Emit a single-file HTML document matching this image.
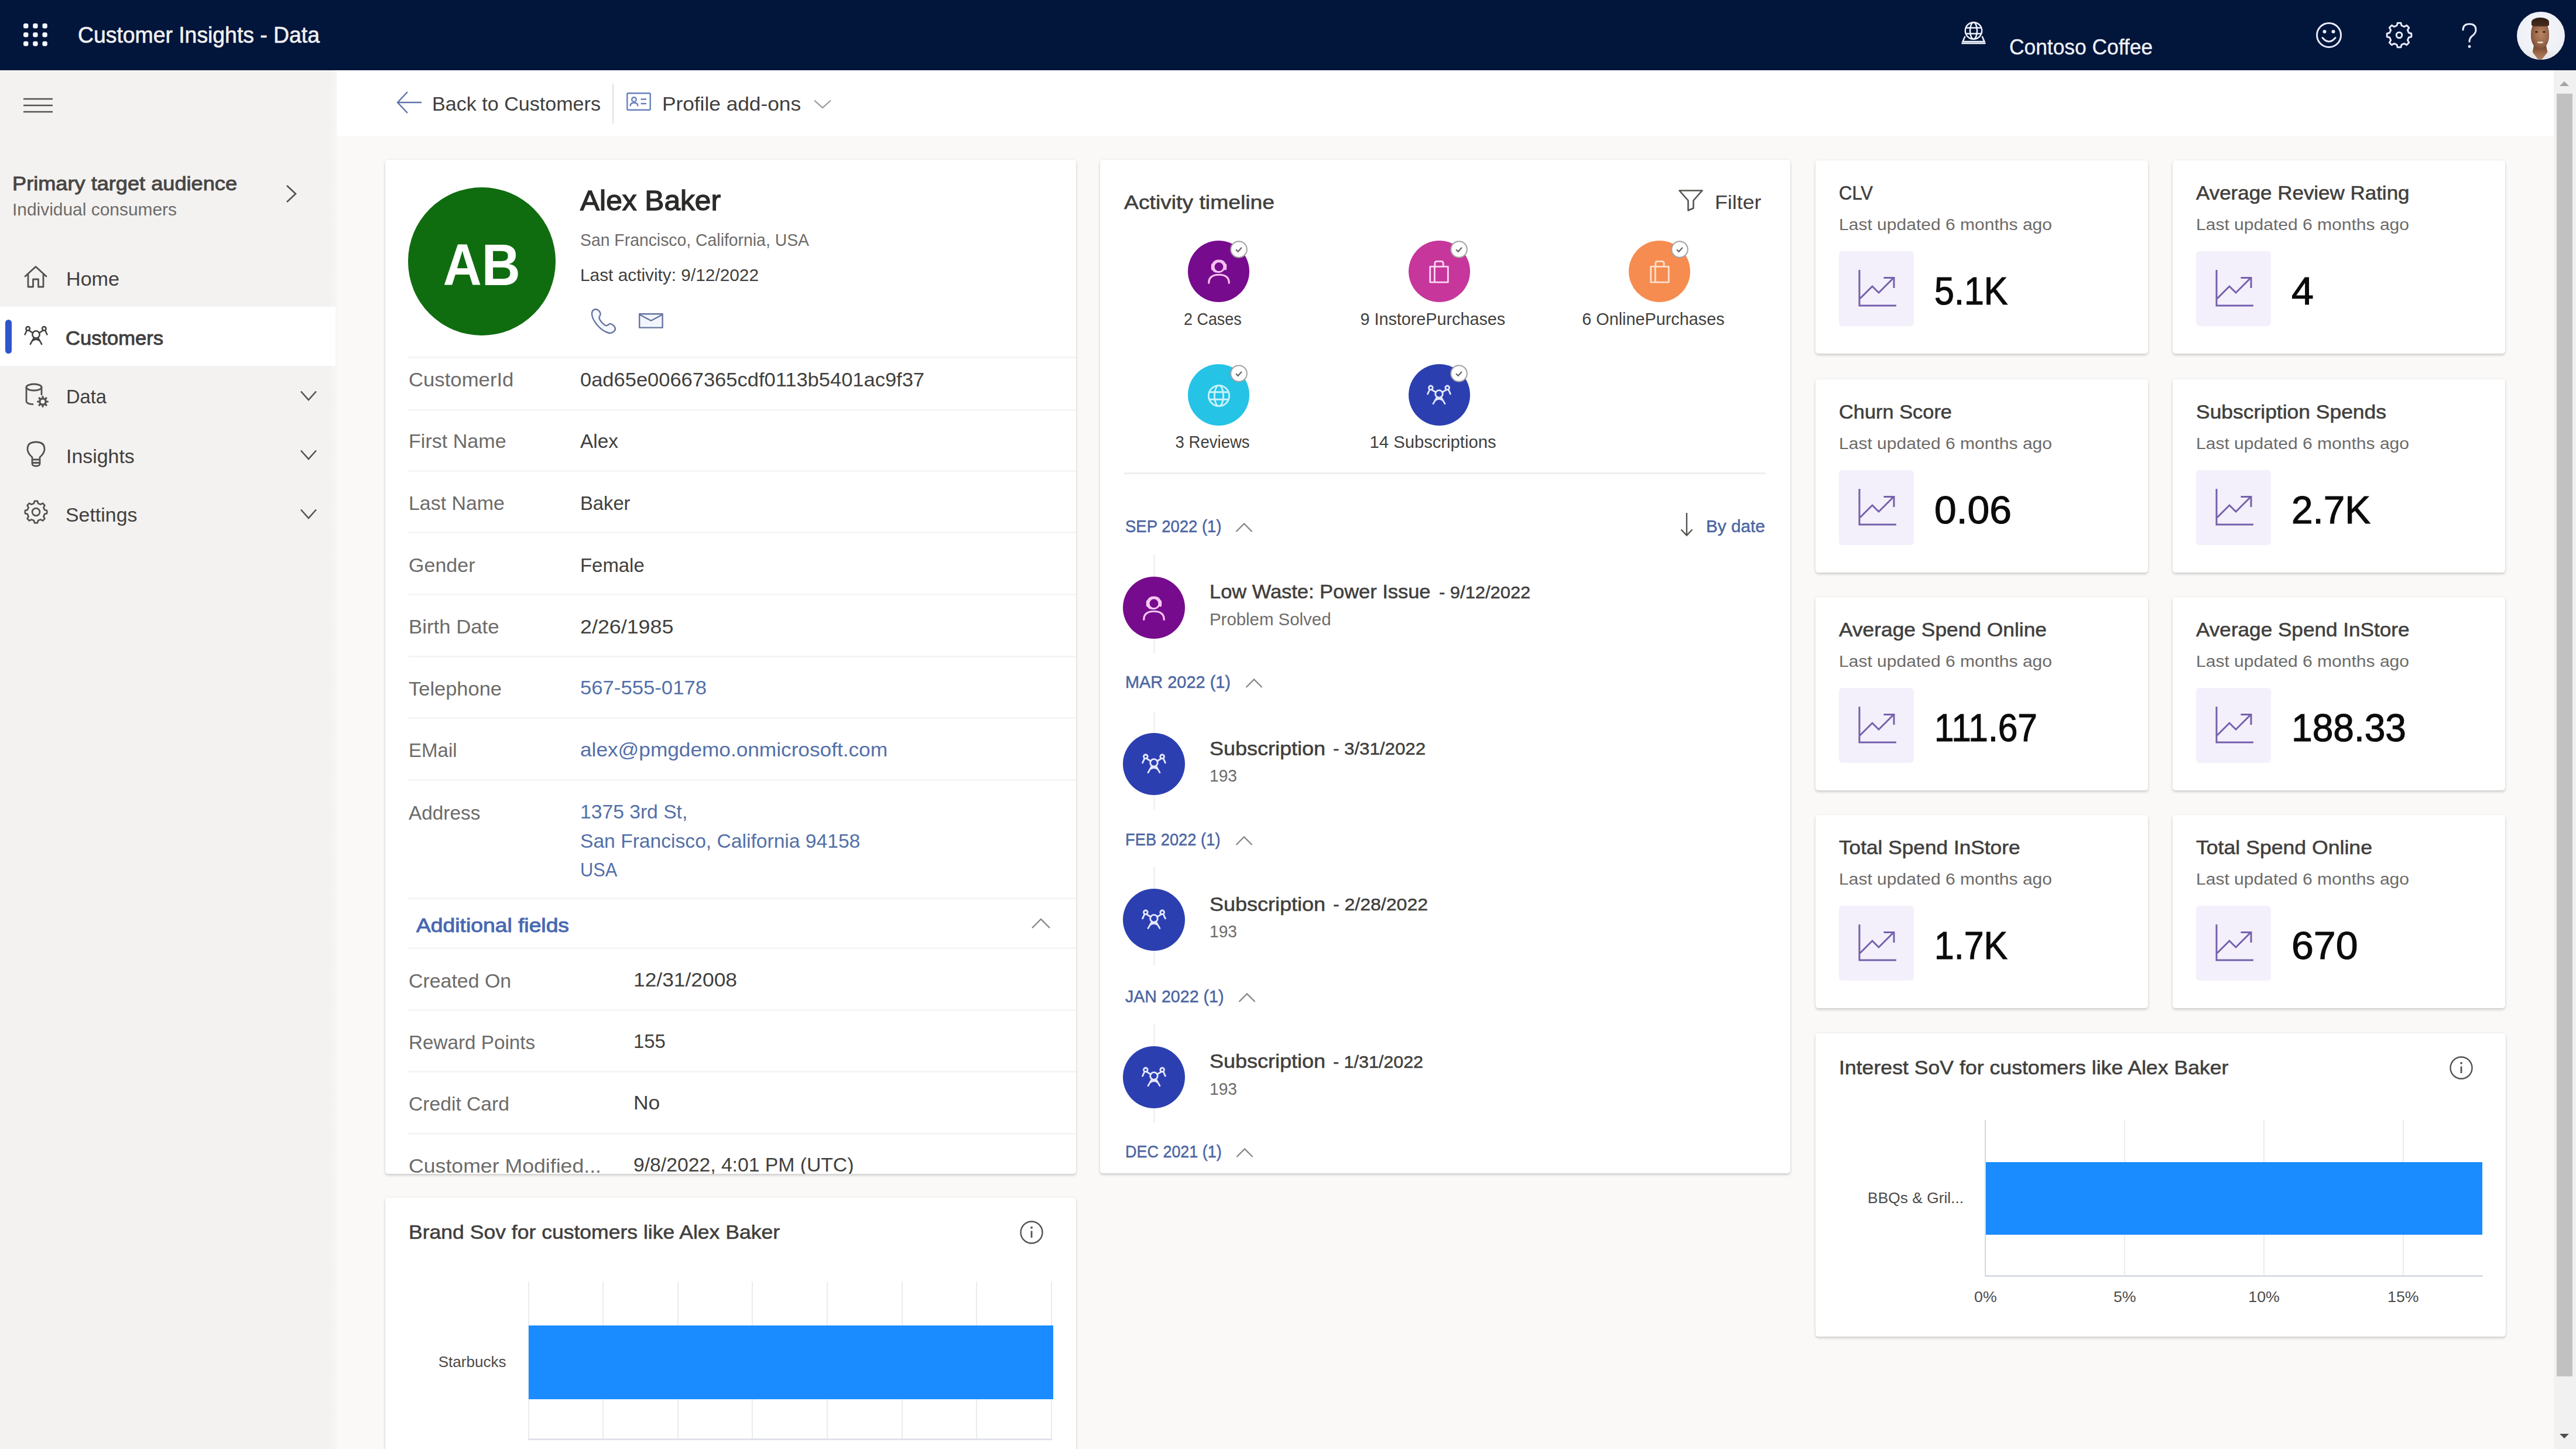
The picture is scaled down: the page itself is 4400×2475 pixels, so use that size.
<!DOCTYPE html>
<html><head><meta charset="utf-8"><title>Customer Insights - Data</title>
<style>
html,body{margin:0;padding:0;}
body{width:4400px;height:2475px;overflow:hidden;position:relative;background:#faf9f8;font-family:"Liberation Sans", sans-serif;}
body div,body svg{position:absolute;}
.t{white-space:nowrap;}
.card{background:#fff;border-radius:5px;box-shadow:0 3px 4px rgba(0,0,0,.15),0 0 4px rgba(0,0,0,.07);}
</style></head><body>
<div style="left:0px;top:0px;width:4400px;height:120px;background:#02153a;"></div>
<div style="left:0px;top:120px;width:575px;height:2355px;background:#f3f2f1;"></div>
<div style="left:575px;top:120px;width:3787px;height:112px;background:#ffffff;"></div>
<div style="left:563px;top:120px;width:12px;height:2355px;background:linear-gradient(90deg,rgba(255,255,255,0),rgba(255,255,255,.35));"></div>
<div style="left:4362px;top:120px;width:38px;height:2355px;background:#f1f1f1;"></div>
<div style="left:4367px;top:160px;width:27px;height:2191px;background:#c1c1c1;"></div>
<svg style="left:4370px;top:136px;" width="20" height="14" viewBox="0 0 20 14" fill="none"><path d="M2 11 L10 3 L18 11 Z" fill="#a3a3a3"/></svg>
<svg style="left:4370px;top:2446px;" width="20" height="14" viewBox="0 0 20 14" fill="none"><path d="M2 3 L10 11 L18 3 Z" fill="#505050"/></svg>
<svg style="left:39.5px;top:39.5px;" width="42" height="40" viewBox="0 0 42 40" fill="none"><rect x="0" y="0" width="8.4" height="8.4" rx="3" fill="#f4f8ff"/><rect x="0" y="15.2" width="8.4" height="8.4" rx="3" fill="#f4f8ff"/><rect x="0" y="30.4" width="8.4" height="8.4" rx="3" fill="#f4f8ff"/><rect x="16.2" y="0" width="8.4" height="8.4" rx="3" fill="#f4f8ff"/><rect x="16.2" y="15.2" width="8.4" height="8.4" rx="3" fill="#f4f8ff"/><rect x="16.2" y="30.4" width="8.4" height="8.4" rx="3" fill="#f4f8ff"/><rect x="32.4" y="0" width="8.4" height="8.4" rx="3" fill="#f4f8ff"/><rect x="32.4" y="15.2" width="8.4" height="8.4" rx="3" fill="#f4f8ff"/><rect x="32.4" y="30.4" width="8.4" height="8.4" rx="3" fill="#f4f8ff"/></svg>
<div class="t" style="left:133px;top:35.0px;line-height:50px;font-size:38.8px;font-weight:normal;-webkit-text-stroke:0.66px currentColor;color:#f0f0f0;transform:scaleX(0.9625);transform-origin:left center;">Customer Insights - Data</div>
<svg style="left:3348px;top:36px;" width="46" height="40" viewBox="0 0 46 40" fill="none"><g stroke="#eef2fb" stroke-width="2.5" fill="none"><circle cx="23" cy="16.5" r="14.2"/><ellipse cx="23" cy="16.5" rx="6" ry="14.2"/><path d="M10 11.5 H36 M10 21.5 H36"/><path d="M8.5 26 L4.5 35 H41.5 L37.5 26"/><path d="M2.5 37.8 H43.5" stroke-width="2.8"/></g></svg>
<div class="t" style="left:3432px;top:55.5px;line-height:49px;font-size:37.5px;font-weight:normal;color:#eef1f8;transform:scaleX(0.9426);transform-origin:left center;-webkit-text-stroke:0.4px #eef1f8;">Contoso Coffee</div>
<svg style="left:3954px;top:36px;" width="48" height="48" viewBox="0 0 48 48" fill="none"><g stroke="#e6eafb" stroke-width="3" fill="none" stroke-linecap="round"><circle cx="24" cy="24" r="20.5"/><path d="M13 28.5 Q24 41.5 35 28.5"/></g><circle cx="16.5" cy="18" r="3" fill="#e6eafb"/><circle cx="31.5" cy="18" r="3" fill="#e6eafb"/></svg>
<svg style="left:4074px;top:36px;" width="48" height="48" viewBox="0 0 48 48" fill="none"><g stroke="#e6eafb" stroke-width="3" fill="none" stroke-linejoin="round"><path d="M19.95 7.70 L21.20 3.19 L26.80 3.19 L28.05 7.70 L32.67 9.61 L36.74 7.31 L40.69 11.26 L38.39 15.33 L40.30 19.95 L44.81 21.20 L44.81 26.80 L40.30 28.05 L38.39 32.67 L40.69 36.74 L36.74 40.69 L32.67 38.39 L28.05 40.30 L26.80 44.81 L21.20 44.81 L19.95 40.30 L15.33 38.39 L11.26 40.69 L7.31 36.74 L9.61 32.67 L7.70 28.05 L3.19 26.80 L3.19 21.20 L7.70 19.95 L9.61 15.33 L7.31 11.26 L11.26 7.31 L15.33 9.61 Z"/><circle cx="24.0" cy="24.0" r="4.80"/></g></svg>
<svg style="left:4200px;top:38px;" width="36" height="46" viewBox="0 0 36 46" fill="none"><path d="M7 13 Q7 3 18 3 Q29 3 29 13 Q29 19 22 24 Q18 27.5 18 33" stroke="#e6eafb" stroke-width="3" fill="none" stroke-linecap="round"/><circle cx="18" cy="41.5" r="2.4" fill="#e6eafb"/></svg>
<div style="left:4298.5px;top:19.5px;width:82px;height:82px;border-radius:50%;overflow:hidden;background:radial-gradient(circle at 50% 45%,#f7f7fb 0%,#eef0f6 65%,#dde2ec 100%);"><div style="left:6px;top:63px;width:70px;height:30px;border-radius:50% 50% 0 0;background:linear-gradient(180deg,#f3f1f4,#d9d6dc);"></div><div style="left:27px;top:56px;width:26px;height:30px;background:linear-gradient(180deg,#5e3a25 0%,#9a6646 45%,#b98a6c 100%);clip-path:polygon(12% 0,88% 0,100% 45%,50% 100%,0 45%);"></div><div style="left:24.5px;top:15px;width:31px;height:48px;border-radius:47% 47% 45% 45%;background:radial-gradient(ellipse at 56% 48%,#b98563 0%,#99664a 50%,#6f4530 88%,#5a3725 100%);"></div><div style="left:25.5px;top:10px;width:29.5px;height:15px;border-radius:50% 50% 18% 18%;background:linear-gradient(180deg,#2e1c12,#4a2e1e);"></div><div style="left:31px;top:33.5px;width:5px;height:3px;border-radius:50%;background:#3a2217;"></div><div style="left:44px;top:33.5px;width:5px;height:3px;border-radius:50%;background:#3a2217;"></div><div style="left:35px;top:51.5px;width:10.5px;height:3.2px;border-radius:20% 20% 50% 50%;background:#e6d3ca;"></div></div>
<svg style="left:40px;top:166px;" width="50" height="28" viewBox="0 0 50 28" fill="none"><path d="M0 3 H50 M0 14 H50 M0 25 H50" stroke="#54524f" stroke-width="2.4"/></svg>
<div class="t" style="left:21px;top:291.0px;line-height:44px;font-size:33.9px;font-weight:normal;-webkit-text-stroke:0.95px currentColor;color:#484644;transform:scaleX(1.0673);transform-origin:left center;">Primary target audience</div>
<div class="t" style="left:21px;top:339.0px;line-height:38px;font-size:29.1px;font-weight:normal;color:#6d6b69;transform:scaleX(1.0282);transform-origin:left center;">Individual consumers</div>
<svg style="left:486px;top:314px;" width="24" height="34" viewBox="0 0 24 34" fill="none"><path d="M4 3 L19 17 L4 31" stroke="#54524f" stroke-width="2.6"/></svg>
<div style="left:0px;top:524px;width:573px;height:101px;background:#ffffff;"></div>
<div style="left:9px;top:546px;width:11px;height:58px;background:#2f54cc;border-radius:6px;"></div>
<svg style="left:40px;top:452px;" width="42" height="42" viewBox="0 0 42 42" fill="none"><path d="M3 20 L21 3.5 L39 20 M8 16 V38 H16.5 V25 H25.5 V38 H34 V16" stroke="#54524f" stroke-width="2.8" stroke-linejoin="round" stroke-linecap="round"/></svg>
<div class="t" style="left:113px;top:454.0px;line-height:44px;font-size:33.9px;font-weight:normal;color:#413f3d;transform:scaleX(1.0066);transform-origin:left center;">Home</div>
<svg style="left:41px;top:553.5px;" width="41" height="41" viewBox="0 0 41 41" fill="none"><g transform="scale(1.025)" stroke="#413f3d" stroke-width="2.44" fill="none" stroke-linecap="round" stroke-linejoin="round"><circle cx="20" cy="17" r="6"/><path d="M10.5 33 L16.5 22.5 M29.5 33 L23.5 22.5 M14.5 27 Q20 23 25.5 27"/><circle cx="6.5" cy="7" r="3.2"/><path d="M1.5 17 L4.5 10.5 M8.5 10.5 L14.5 14"/><circle cx="33.5" cy="7" r="3.2"/><path d="M38.5 17 L35.5 10.5 M31.5 10.5 L25.5 14"/></g></svg>
<div class="t" style="left:112px;top:555.0px;line-height:44px;font-size:33.9px;font-weight:normal;-webkit-text-stroke:0.95px currentColor;color:#413f3d;transform:scaleX(1.0193);transform-origin:left center;">Customers</div>
<svg style="left:42px;top:654px;" width="44" height="44" viewBox="0 0 44 44" fill="none"><g stroke="#54524f" stroke-width="2.8" fill="none" stroke-linecap="round"><ellipse cx="16" cy="7.5" rx="13" ry="5.5"/><path d="M3 7.5 V31 Q3 36 14 36.5 M29 7.5 V20"/></g><circle cx="31" cy="32" r="5.2" stroke="#54524f" stroke-width="3.4" fill="none"/><g stroke="#54524f" stroke-width="3.2" stroke-linecap="round"><path d="M31 23.5 V25 M31 39 V40.5 M22.5 32 H24 M38 32 H39.5 M25 26 L26 27 M36 37 L37 38 M25 38 L26 37 M36 27 L37 26"/></g></svg>
<div class="t" style="left:113px;top:655.0px;line-height:44px;font-size:33.9px;font-weight:normal;color:#413f3d;transform:scaleX(0.9638);transform-origin:left center;">Data</div>
<svg style="left:513px;top:667px;" width="28" height="18" viewBox="0 0 28 18" fill="none"><path d="M1 1.5 L14.0 16 L27 1.5" stroke="#54524f" stroke-width="2.6"/></svg>
<svg style="left:44px;top:752px;" width="36" height="48" viewBox="0 0 36 48" fill="none"><g stroke="#54524f" stroke-width="2.8" fill="none" stroke-linejoin="round"><path d="M11 33 V29 Q3 22 3 15 Q3 3 17.5 3 Q32 3 32 15 Q32 22 24 29 V33 Z"/><path d="M11 33 V40 Q11 44 17.5 44 Q24 44 24 40 V33 M11 38.5 H24"/></g></svg>
<div class="t" style="left:113px;top:757.0px;line-height:44px;font-size:33.9px;font-weight:normal;color:#413f3d;">Insights</div>
<svg style="left:513px;top:768px;" width="28" height="18" viewBox="0 0 28 18" fill="none"><path d="M1 1.5 L14.0 16 L27 1.5" stroke="#54524f" stroke-width="2.6"/></svg>
<svg style="left:40px;top:853px;" width="43" height="43" viewBox="0 0 43 43" fill="none"><g stroke="#54524f" stroke-width="2.7" fill="none" stroke-linejoin="round"><path d="M17.87 6.89 L19.00 2.87 L24.00 2.87 L25.13 6.89 L29.26 8.61 L32.91 6.56 L36.44 10.09 L34.39 13.74 L36.11 17.87 L40.13 19.00 L40.13 24.00 L36.11 25.13 L34.39 29.26 L36.44 32.91 L32.91 36.44 L29.26 34.39 L25.13 36.11 L24.00 40.13 L19.00 40.13 L17.87 36.11 L13.74 34.39 L10.09 36.44 L6.56 32.91 L8.61 29.26 L6.89 25.13 L2.87 24.00 L2.87 19.00 L6.89 17.87 L8.61 13.74 L6.56 10.09 L10.09 6.56 L13.74 8.61 Z"/><circle cx="21.5" cy="21.5" r="6.45"/></g></svg>
<div class="t" style="left:112px;top:857.0px;line-height:44px;font-size:33.9px;font-weight:normal;color:#413f3d;">Settings</div>
<svg style="left:513px;top:869px;" width="28" height="18" viewBox="0 0 28 18" fill="none"><path d="M1 1.5 L14.0 16 L27 1.5" stroke="#54524f" stroke-width="2.6"/></svg>
<svg style="left:676px;top:155px;" width="46" height="40" viewBox="0 0 46 40" fill="none"><path d="M44 20 H3 M20 2 L3 20 L20 38" stroke="#6074ab" stroke-width="2.5" stroke-linejoin="round"/></svg>
<div class="t" style="left:738px;top:155.0px;line-height:44px;font-size:33.9px;font-weight:normal;color:#413f3d;transform:scaleX(1.0059);transform-origin:left center;">Back to Customers</div>
<div style="left:1046px;top:143px;width:2px;height:68px;background:#e1dfdd;"></div>
<svg style="left:1069.5px;top:158px;" width="42" height="32" viewBox="0 0 42 32" fill="none"><g stroke="#6880bb" stroke-width="2.4" fill="none"><rect x="1.3" y="1.3" width="39.4" height="28.4" rx="1.5"/><circle cx="13" cy="12" r="3.8"/><path d="M6.5 23.5 Q6.5 17.5 13 17.5 Q19.5 17.5 19.5 23.5 M24.5 11.5 H34 M24.5 19 H34"/></g></svg>
<div class="t" style="left:1131px;top:155.0px;line-height:44px;font-size:33.9px;font-weight:normal;color:#413f3d;transform:scaleX(1.0397);transform-origin:left center;">Profile add-ons</div>
<svg style="left:1390px;top:170px;" width="30" height="16" viewBox="0 0 30 16" fill="none"><path d="M1 1.5 L15.0 14 L29 1.5" stroke="#9a9896" stroke-width="2.2"/></svg>
<div class="card" style="left:658px;top:273px;width:1180px;height:1732px;overflow:hidden;">
<div style="left:38.5px;top:47px;width:252.5px;height:252.5px;background:#0f6d10;border-radius:50%;"></div>
<div class="t" style="left:91.9px;top:114.0px;line-height:131px;font-size:100.9px;font-weight:bold;color:#ffffff;transform:scaleX(0.9058);transform-origin:center center;">AB</div>
<div class="t" style="left:332.5px;top:38.0px;line-height:63px;font-size:48.5px;font-weight:normal;-webkit-text-stroke:1.36px currentColor;color:#2b2a29;transform:scaleX(1.0233);transform-origin:left center;">Alex Baker</div>
<div class="t" style="left:332.5px;top:117.5px;line-height:38px;font-size:29.1px;font-weight:normal;color:#6d6b69;transform:scaleX(0.9750);transform-origin:left center;">San Francisco, California, USA</div>
<div class="t" style="left:332.5px;top:177.7px;line-height:38px;font-size:29.1px;font-weight:normal;color:#413f3d;transform:scaleX(1.0249);transform-origin:left center;">Last activity: 9/12/2022</div>
<svg style="left:350px;top:253px;" width="46" height="46" viewBox="0 0 46 46" fill="none"><path d="M9.5 2.2 C5 2.2 2.6 6 3 11 C4 22 17 38 31 42.5 C36 44.3 43.4 40 43 35 C42.6 32 38 27.6 35 27.1 C32 26.6 30 30.6 27.5 30.1 C23 29.2 16 21 15.5 17 C15.1 14 18.4 12.5 17.5 9 C16.6 5.5 13 2.2 9.5 2.2 Z" stroke="#66749f" stroke-width="2.4" stroke-linejoin="round" fill="#f6f8ff"/></svg>
<svg style="left:433px;top:261.5px;" width="42" height="26" viewBox="0 0 42 26" fill="none"><g stroke="#66749f" stroke-width="2.4" stroke-linejoin="round"><rect x="1.2" y="1.2" width="39.4" height="23.4" fill="#f3f6ff"/><path d="M1.8 2.5 L21 12.8 L40.2 2.5" fill="none"/></g></svg>
<div style="left:38.5px;top:336px;width:1141.5px;height:3px;background:#f6f5f4;"></div>
<div class="t" style="left:40px;top:352.7px;line-height:44px;font-size:33.9px;font-weight:normal;color:#6d6b69;transform:scaleX(1.0241);transform-origin:left center;">CustomerId</div>
<div class="t" style="left:332.5px;top:352.7px;line-height:44px;font-size:33.9px;font-weight:normal;color:#413f3d;transform:scaleX(1.0174);transform-origin:left center;">0ad65e00667365cdf0113b5401ac9f37</div>
<div style="left:38.5px;top:426px;width:1141.5px;height:3px;background:#f6f5f4;"></div>
<div class="t" style="left:40px;top:458.3px;line-height:44px;font-size:33.9px;font-weight:normal;color:#6d6b69;transform:scaleX(1.0060);transform-origin:left center;">First Name</div>
<div class="t" style="left:332.5px;top:458.3px;line-height:44px;font-size:33.9px;font-weight:normal;color:#413f3d;transform:scaleX(0.9858);transform-origin:left center;">Alex</div>
<div style="left:38.5px;top:530px;width:1141.5px;height:3px;background:#f6f5f4;"></div>
<div class="t" style="left:40px;top:563.9px;line-height:44px;font-size:33.9px;font-weight:normal;color:#6d6b69;">Last Name</div>
<div class="t" style="left:332.5px;top:563.9px;line-height:44px;font-size:33.9px;font-weight:normal;color:#413f3d;transform:scaleX(0.9656);transform-origin:left center;">Baker</div>
<div style="left:38.5px;top:635px;width:1141.5px;height:3px;background:#f6f5f4;"></div>
<div class="t" style="left:40px;top:669.5px;line-height:44px;font-size:33.9px;font-weight:normal;color:#6d6b69;transform:scaleX(1.0040);transform-origin:left center;">Gender</div>
<div class="t" style="left:332.5px;top:669.5px;line-height:44px;font-size:33.9px;font-weight:normal;color:#413f3d;transform:scaleX(0.9707);transform-origin:left center;">Female</div>
<div style="left:38.5px;top:741px;width:1141.5px;height:3px;background:#f6f5f4;"></div>
<div class="t" style="left:40px;top:775.1px;line-height:44px;font-size:33.9px;font-weight:normal;color:#6d6b69;transform:scaleX(1.0259);transform-origin:left center;">Birth Date</div>
<div class="t" style="left:332.5px;top:775.1px;line-height:44px;font-size:33.9px;font-weight:normal;color:#413f3d;transform:scaleX(1.0572);transform-origin:left center;">2/26/1985</div>
<div style="left:38.5px;top:847px;width:1141.5px;height:3px;background:#f6f5f4;"></div>
<div class="t" style="left:40px;top:880.7px;line-height:44px;font-size:33.9px;font-weight:normal;color:#6d6b69;transform:scaleX(1.0165);transform-origin:left center;">Telephone</div>
<div class="t" style="left:332.5px;top:879.2px;line-height:44px;font-size:33.9px;font-weight:normal;color:#5370a8;transform:scaleX(1.0234);transform-origin:left center;">567-555-0178</div>
<div style="left:38.5px;top:952px;width:1141.5px;height:3px;background:#f6f5f4;"></div>
<div class="t" style="left:40px;top:986.3px;line-height:44px;font-size:33.9px;font-weight:normal;color:#6d6b69;transform:scaleX(0.9746);transform-origin:left center;">EMail</div>
<div class="t" style="left:332.5px;top:984.8px;line-height:44px;font-size:33.9px;font-weight:normal;color:#5370a8;transform:scaleX(1.0390);transform-origin:left center;">alex@pmgdemo.onmicrosoft.com</div>
<div style="left:38.5px;top:1058px;width:1141.5px;height:3px;background:#f6f5f4;"></div>
<div class="t" style="left:40px;top:1093.0px;line-height:44px;font-size:33.9px;font-weight:normal;color:#6d6b69;transform:scaleX(0.9845);transform-origin:left center;">Address</div>
<div class="t" style="left:332.5px;top:1091.0px;line-height:44px;font-size:33.9px;font-weight:normal;color:#5370a8;transform:scaleX(0.9927);transform-origin:left center;">1375 3rd St,</div>
<div class="t" style="left:332.5px;top:1140.7px;line-height:44px;font-size:33.9px;font-weight:normal;color:#5370a8;transform:scaleX(0.9918);transform-origin:left center;">San Francisco, California 94158</div>
<div class="t" style="left:332.5px;top:1190.4px;line-height:44px;font-size:33.9px;font-weight:normal;color:#5370a8;transform:scaleX(0.9098);transform-origin:left center;">USA</div>
<div style="left:38.5px;top:1260px;width:1141.5px;height:3px;background:#f6f5f4;"></div>
<div class="t" style="left:53.39999999999998px;top:1285.0px;line-height:44px;font-size:33.9px;font-weight:normal;-webkit-text-stroke:0.95px currentColor;color:#4868b0;transform:scaleX(1.0995);transform-origin:left center;">Additional fields</div>
<svg style="left:1103px;top:1294px" width="34" height="20" viewBox="0 0 34 20" fill="none"><path d="M2 18 L17 3 L32 18" stroke="#8a8886" stroke-width="2.4"/></svg>
<div style="left:38.5px;top:1345px;width:1141.5px;height:3px;background:#f6f5f4;"></div>
<div class="t" style="left:40px;top:1379.6px;line-height:44px;font-size:33.9px;font-weight:normal;color:#6d6b69;">Created On</div>
<div class="t" style="left:424.29999999999995px;top:1377.6px;line-height:44px;font-size:33.9px;font-weight:normal;color:#413f3d;transform:scaleX(1.0435);transform-origin:left center;">12/31/2008</div>
<div style="left:38.5px;top:1451px;width:1141.5px;height:3px;background:#f6f5f4;"></div>
<div class="t" style="left:40px;top:1484.8px;line-height:44px;font-size:33.9px;font-weight:normal;color:#6d6b69;transform:scaleX(0.9810);transform-origin:left center;">Reward Points</div>
<div class="t" style="left:424.29999999999995px;top:1482.8px;line-height:44px;font-size:33.9px;font-weight:normal;color:#413f3d;transform:scaleX(0.9673);transform-origin:left center;">155</div>
<div style="left:38.5px;top:1556px;width:1141.5px;height:3px;background:#f6f5f4;"></div>
<div class="t" style="left:40px;top:1590.0px;line-height:44px;font-size:33.9px;font-weight:normal;color:#6d6b69;transform:scaleX(0.9926);transform-origin:left center;">Credit Card</div>
<div class="t" style="left:424.29999999999995px;top:1588.0px;line-height:44px;font-size:33.9px;font-weight:normal;color:#413f3d;transform:scaleX(1.0455);transform-origin:left center;">No</div>
<div style="left:38.5px;top:1662px;width:1141.5px;height:3px;background:#f6f5f4;"></div>
<div class="t" style="left:40px;top:1696.0px;line-height:44px;font-size:33.9px;font-weight:normal;color:#6d6b69;transform:scaleX(1.0522);transform-origin:left center;">Customer Modified...</div>
<div class="t" style="left:424.29999999999995px;top:1694.0px;line-height:44px;font-size:33.9px;font-weight:normal;color:#413f3d;transform:scaleX(0.9942);transform-origin:left center;">9/8/2022, 4:01 PM (UTC)</div>
</div>
<div class="card" style="left:658px;top:2046px;width:1180px;height:500px;"></div>
<div class="t" style="left:698px;top:2082.0px;line-height:44px;font-size:33.9px;font-weight:normal;-webkit-text-stroke:0.58px currentColor;color:#413f3d;transform:scaleX(1.0486);transform-origin:left center;">Brand Sov for customers like Alex Baker</div>
<svg style="left:1741px;top:2084px;" width="42" height="42" viewBox="0 0 42 42" fill="none"><circle cx="21" cy="21" r="18.5" stroke="#55534f" stroke-width="2.4"/><path d="M21 18.5 V30" stroke="#55534f" stroke-width="2.8"/><circle cx="21" cy="12.8" r="1.9" fill="#55534f"/></svg>
<div style="left:902px;top:2189px;width:2px;height:270px;background:#eaecf1;"></div>
<div style="left:1029px;top:2189px;width:2px;height:270px;background:#eaecf1;"></div>
<div style="left:1157px;top:2189px;width:2px;height:270px;background:#eaecf1;"></div>
<div style="left:1284px;top:2189px;width:2px;height:270px;background:#eaecf1;"></div>
<div style="left:1412px;top:2189px;width:2px;height:270px;background:#eaecf1;"></div>
<div style="left:1540px;top:2189px;width:2px;height:270px;background:#eaecf1;"></div>
<div style="left:1667px;top:2189px;width:2px;height:270px;background:#eaecf1;"></div>
<div style="left:1795px;top:2189px;width:2px;height:270px;background:#eaecf1;"></div>
<div style="left:902px;top:2457px;width:895px;height:2.5px;background:#dfe2ea;"></div>
<div style="left:903px;top:2263.5px;width:896px;height:126px;background:#1a8cff;"></div>
<div class="t" style="left:746.3px;top:2308.5px;line-height:35px;font-size:26.7px;font-weight:normal;color:#4d4b49;transform:scaleX(0.9775);transform-origin:right center;">Starbucks</div>
<div class="card" style="left:1879px;top:273px;width:1179px;height:1731px;"></div>
<div class="t" style="left:1920px;top:322.7px;line-height:44px;font-size:33.9px;font-weight:normal;-webkit-text-stroke:0.58px currentColor;color:#413f3d;transform:scaleX(1.1005);transform-origin:left center;">Activity timeline</div>
<svg style="left:2866px;top:323px;" width="44" height="39" viewBox="0 0 44 39" fill="none"><path d="M2.5 2.5 H41.5 L26.5 19.5 V32.5 L17.5 36.5 V19.5 Z" stroke="#54524f" stroke-width="2.6" stroke-linejoin="round"/></svg>
<div class="t" style="left:2929px;top:322.7px;line-height:44px;font-size:33.9px;font-weight:normal;color:#413f3d;transform:scaleX(1.0556);transform-origin:left center;">Filter</div>
<div style="left:2029.1px;top:410.5px;width:105px;height:105px;background:#770b8d;border-radius:50%;"></div>
<svg style="left:2058.6px;top:441.0px;" width="46" height="46" viewBox="0 0 46 46" fill="none"><g transform="scale(1.0454545454545454)" stroke="#f6c2f1" stroke-width="3" fill="none" stroke-linecap="round"><circle cx="22" cy="14" r="8.6"/><path d="M5.5 40.5 Q5.5 27 22 27 Q38.5 27 38.5 40.5"/><path d="M12 11 Q13 3.5 22 3.5 Q31 3.5 32 11" stroke-width="2.4"/><path d="M11.5 11 V17.5 M32.5 11 V17.5" stroke-width="4.2"/><path d="M12 18 Q13.5 23 21 22.5" stroke-width="2.2"/></g></svg>
<svg style="left:2099.6px;top:410px;" width="32" height="32" viewBox="0 0 32 32" fill="none"><circle cx="16" cy="16" r="13.8" fill="#fff" stroke="#a3a19f" stroke-width="2"/><path d="M11 16.3 L14.6 19.8 L21 12.8" stroke="#6b6967" stroke-width="2.3" fill="none"/></svg>
<div class="t" style="left:2017.7px;top:525.6px;line-height:38px;font-size:29.1px;font-weight:normal;color:#413f3d;transform:scaleX(0.9229);transform-origin:center center;">2 Cases</div>
<div style="left:2405.5px;top:410.5px;width:105px;height:105px;background:#c6369b;border-radius:50%;"></div>
<svg style="left:2437.0px;top:443.0px;" width="42" height="42" viewBox="0 0 42 42" fill="none"><g transform="scale(0.9545454545454546)" stroke="#fcd6f0" stroke-width="3" fill="none" stroke-linejoin="round"><rect x="6" y="13" width="32" height="28"/><path d="M14 41 V13 M14.5 13 V7 Q14.5 3.5 18.5 3.5 H25.5 Q29.5 3.5 29.5 7 V13"/></g></svg>
<svg style="left:2476px;top:410px;" width="32" height="32" viewBox="0 0 32 32" fill="none"><circle cx="16" cy="16" r="13.8" fill="#fff" stroke="#a3a19f" stroke-width="2"/><path d="M11 16.3 L14.6 19.8 L21 12.8" stroke="#6b6967" stroke-width="2.3" fill="none"/></svg>
<div class="t" style="left:2322.2px;top:525.6px;line-height:38px;font-size:29.1px;font-weight:normal;color:#413f3d;transform:scaleX(0.9881);transform-origin:center center;">9 InstorePurchases</div>
<div style="left:2782.2px;top:410.5px;width:105px;height:105px;background:#f68c4f;border-radius:50%;"></div>
<svg style="left:2813.7px;top:443.0px;" width="42" height="42" viewBox="0 0 42 42" fill="none"><g transform="scale(0.9545454545454546)" stroke="#fde0cb" stroke-width="3" fill="none" stroke-linejoin="round"><rect x="6" y="13" width="32" height="28"/><path d="M14 41 V13 M14.5 13 V7 Q14.5 3.5 18.5 3.5 H25.5 Q29.5 3.5 29.5 7 V13"/></g></svg>
<svg style="left:2852.7px;top:410px;" width="32" height="32" viewBox="0 0 32 32" fill="none"><circle cx="16" cy="16" r="13.8" fill="#fff" stroke="#a3a19f" stroke-width="2"/><path d="M11 16.3 L14.6 19.8 L21 12.8" stroke="#6b6967" stroke-width="2.3" fill="none"/></svg>
<div class="t" style="left:2701.3px;top:525.6px;line-height:38px;font-size:29.1px;font-weight:normal;color:#413f3d;transform:scaleX(0.9901);transform-origin:center center;">6 OnlinePurchases</div>
<div style="left:2029.1px;top:622.3px;width:105px;height:105px;background:#25c3e6;border-radius:50%;"></div>
<svg style="left:2060.6px;top:654.8px;" width="42" height="42" viewBox="0 0 42 42" fill="none"><g transform="scale(0.9545454545454546)" stroke="#c9f3fb" stroke-width="3" fill="none"><circle cx="22" cy="22" r="18.5"/><ellipse cx="22" cy="22" rx="8" ry="18.5"/><path d="M4.5 15.5 H39.5 M4.5 28.5 H39.5"/></g></svg>
<svg style="left:2099.6px;top:621.8px;" width="32" height="32" viewBox="0 0 32 32" fill="none"><circle cx="16" cy="16" r="13.8" fill="#fff" stroke="#a3a19f" stroke-width="2"/><path d="M11 16.3 L14.6 19.8 L21 12.8" stroke="#6b6967" stroke-width="2.3" fill="none"/></svg>
<div class="t" style="left:2004.0px;top:736.0px;line-height:38px;font-size:29.1px;font-weight:normal;color:#413f3d;transform:scaleX(0.9462);transform-origin:center center;">3 Reviews</div>
<div style="left:2405.5px;top:622.3px;width:105px;height:105px;background:#2c3fb1;border-radius:50%;"></div>
<svg style="left:2437.0px;top:654.8px;" width="42" height="42" viewBox="0 0 42 42" fill="none"><g transform="scale(1.05)" stroke="#e3e7ff" stroke-width="2.67" fill="none" stroke-linecap="round" stroke-linejoin="round"><circle cx="20" cy="17" r="6"/><path d="M10.5 33 L16.5 22.5 M29.5 33 L23.5 22.5 M14.5 27 Q20 23 25.5 27"/><circle cx="6.5" cy="7" r="3.2"/><path d="M1.5 17 L4.5 10.5 M8.5 10.5 L14.5 14"/><circle cx="33.5" cy="7" r="3.2"/><path d="M38.5 17 L35.5 10.5 M31.5 10.5 L25.5 14"/></g></svg>
<svg style="left:2476px;top:621.8px;" width="32" height="32" viewBox="0 0 32 32" fill="none"><circle cx="16" cy="16" r="13.8" fill="#fff" stroke="#a3a19f" stroke-width="2"/><path d="M11 16.3 L14.6 19.8 L21 12.8" stroke="#6b6967" stroke-width="2.3" fill="none"/></svg>
<div class="t" style="left:2340.0px;top:736.0px;line-height:38px;font-size:29.1px;font-weight:normal;color:#413f3d;transform:scaleX(1.0042);transform-origin:center center;">14 Subscriptions</div>
<div style="left:1920px;top:807px;width:1096px;height:3px;background:#efeeed;"></div>
<div class="t" style="left:1922px;top:881.1px;line-height:37px;font-size:28.6px;font-weight:normal;-webkit-text-stroke:0.49px currentColor;color:#4c66a2;transform:scaleX(0.9611);transform-origin:left center;">SEP 2022 (1)</div>
<svg style="left:2110px;top:892.1px;" width="30" height="18" viewBox="0 0 30 18" fill="none"><path d="M1.5 16 L15 2.5 L28.5 16" stroke="#8a8886" stroke-width="2.4"/></svg>
<div class="t" style="left:2913.8px;top:881.1px;line-height:37px;font-size:28.6px;font-weight:normal;-webkit-text-stroke:0.49px currentColor;color:#4c66a2;transform:scaleX(1.0395);transform-origin:left center;">By date</div>
<svg style="left:2868px;top:874px;" width="26" height="44" viewBox="0 0 26 44" fill="none"><path d="M13 2 V40 M3.5 30.5 L13 40.5 L22.5 30.5" stroke="#55534f" stroke-width="2.4"/></svg>
<div style="left:1970px;top:947.5px;width:3px;height:168px;background:#f3f2f1;"></div>
<div style="left:1918.3px;top:984.5px;width:106px;height:106px;background:#770b8d;border-radius:50%;"></div>
<svg style="left:1948.3px;top:1015.5px;" width="46" height="46" viewBox="0 0 46 46" fill="none"><g transform="scale(1.0454545454545454)" stroke="#f9c9f4" stroke-width="3" fill="none" stroke-linecap="round"><circle cx="22" cy="14" r="8.6"/><path d="M5.5 40.5 Q5.5 27 22 27 Q38.5 27 38.5 40.5"/><path d="M12 11 Q13 3.5 22 3.5 Q31 3.5 32 11" stroke-width="2.4"/><path d="M11.5 11 V17.5 M32.5 11 V17.5" stroke-width="4.2"/><path d="M12 18 Q13.5 23 21 22.5" stroke-width="2.2"/></g></svg>
<div class="t" style="left:2066px;top:988.0px;line-height:44px;font-size:33.9px;font-weight:normal;-webkit-text-stroke:0.58px currentColor;color:#413f3d;transform:scaleX(1.0156);transform-origin:left center;">Low Waste: Power Issue</div>
<div class="t" style="left:2457.7px;top:992.5px;line-height:38px;font-size:29.1px;font-weight:normal;-webkit-text-stroke:0.49px currentColor;color:#413f3d;transform:scaleX(1.0618);transform-origin:left center;">- 9/12/2022</div>
<div class="t" style="left:2066px;top:1038.5px;line-height:38px;font-size:29.1px;font-weight:normal;color:#6d6b69;transform:scaleX(1.0103);transform-origin:left center;">Problem Solved</div>
<div class="t" style="left:1922px;top:1147.2px;line-height:37px;font-size:28.6px;font-weight:normal;-webkit-text-stroke:0.49px currentColor;color:#4c66a2;transform:scaleX(1.0112);transform-origin:left center;">MAR 2022 (1)</div>
<svg style="left:2127px;top:1158.2px;" width="30" height="18" viewBox="0 0 30 18" fill="none"><path d="M1.5 16 L15 2.5 L28.5 16" stroke="#8a8886" stroke-width="2.4"/></svg>
<div style="left:1970px;top:1215.2px;width:3px;height:168px;background:#f3f2f1;"></div>
<div style="left:1918.3px;top:1252.2px;width:106px;height:106px;background:#2c3fb1;border-radius:50%;"></div>
<svg style="left:1950.3px;top:1285.2px;" width="42" height="42" viewBox="0 0 42 42" fill="none"><g transform="scale(1.05)" stroke="#e6e9ff" stroke-width="2.67" fill="none" stroke-linecap="round" stroke-linejoin="round"><circle cx="20" cy="17" r="6"/><path d="M10.5 33 L16.5 22.5 M29.5 33 L23.5 22.5 M14.5 27 Q20 23 25.5 27"/><circle cx="6.5" cy="7" r="3.2"/><path d="M1.5 17 L4.5 10.5 M8.5 10.5 L14.5 14"/><circle cx="33.5" cy="7" r="3.2"/><path d="M38.5 17 L35.5 10.5 M31.5 10.5 L25.5 14"/></g></svg>
<div class="t" style="left:2066px;top:1255.7px;line-height:44px;font-size:33.9px;font-weight:normal;-webkit-text-stroke:0.58px currentColor;color:#413f3d;transform:scaleX(1.0617);transform-origin:left center;">Subscription</div>
<div class="t" style="left:2277px;top:1260.2px;line-height:38px;font-size:29.1px;font-weight:normal;-webkit-text-stroke:0.49px currentColor;color:#413f3d;transform:scaleX(1.0733);transform-origin:left center;">- 3/31/2022</div>
<div class="t" style="left:2066px;top:1306.2px;line-height:38px;font-size:29.1px;font-weight:normal;color:#6d6b69;transform:scaleX(0.9681);transform-origin:left center;">193</div>
<div class="t" style="left:1922px;top:1415.5px;line-height:37px;font-size:28.6px;font-weight:normal;-webkit-text-stroke:0.49px currentColor;color:#4c66a2;transform:scaleX(0.9555);transform-origin:left center;">FEB 2022 (1)</div>
<svg style="left:2110px;top:1426.5px;" width="30" height="18" viewBox="0 0 30 18" fill="none"><path d="M1.5 16 L15 2.5 L28.5 16" stroke="#8a8886" stroke-width="2.4"/></svg>
<div style="left:1970px;top:1481.4px;width:3px;height:168px;background:#f3f2f1;"></div>
<div style="left:1918.3px;top:1518.4px;width:106px;height:106px;background:#2c3fb1;border-radius:50%;"></div>
<svg style="left:1950.3px;top:1551.4px;" width="42" height="42" viewBox="0 0 42 42" fill="none"><g transform="scale(1.05)" stroke="#e6e9ff" stroke-width="2.67" fill="none" stroke-linecap="round" stroke-linejoin="round"><circle cx="20" cy="17" r="6"/><path d="M10.5 33 L16.5 22.5 M29.5 33 L23.5 22.5 M14.5 27 Q20 23 25.5 27"/><circle cx="6.5" cy="7" r="3.2"/><path d="M1.5 17 L4.5 10.5 M8.5 10.5 L14.5 14"/><circle cx="33.5" cy="7" r="3.2"/><path d="M38.5 17 L35.5 10.5 M31.5 10.5 L25.5 14"/></g></svg>
<div class="t" style="left:2066px;top:1521.9px;line-height:44px;font-size:33.9px;font-weight:normal;-webkit-text-stroke:0.58px currentColor;color:#413f3d;transform:scaleX(1.0617);transform-origin:left center;">Subscription</div>
<div class="t" style="left:2277px;top:1526.4px;line-height:38px;font-size:29.1px;font-weight:normal;-webkit-text-stroke:0.49px currentColor;color:#413f3d;transform:scaleX(1.1005);transform-origin:left center;">- 2/28/2022</div>
<div class="t" style="left:2066px;top:1572.4px;line-height:38px;font-size:29.1px;font-weight:normal;color:#6d6b69;transform:scaleX(0.9681);transform-origin:left center;">193</div>
<div class="t" style="left:1922px;top:1683.5px;line-height:37px;font-size:28.6px;font-weight:normal;-webkit-text-stroke:0.49px currentColor;color:#4c66a2;">JAN 2022 (1)</div>
<svg style="left:2115px;top:1694.5px;" width="30" height="18" viewBox="0 0 30 18" fill="none"><path d="M1.5 16 L15 2.5 L28.5 16" stroke="#8a8886" stroke-width="2.4"/></svg>
<div style="left:1970px;top:1749.5px;width:3px;height:168px;background:#f3f2f1;"></div>
<div style="left:1918.3px;top:1786.5px;width:106px;height:106px;background:#2c3fb1;border-radius:50%;"></div>
<svg style="left:1950.3px;top:1819.5px;" width="42" height="42" viewBox="0 0 42 42" fill="none"><g transform="scale(1.05)" stroke="#e6e9ff" stroke-width="2.67" fill="none" stroke-linecap="round" stroke-linejoin="round"><circle cx="20" cy="17" r="6"/><path d="M10.5 33 L16.5 22.5 M29.5 33 L23.5 22.5 M14.5 27 Q20 23 25.5 27"/><circle cx="6.5" cy="7" r="3.2"/><path d="M1.5 17 L4.5 10.5 M8.5 10.5 L14.5 14"/><circle cx="33.5" cy="7" r="3.2"/><path d="M38.5 17 L35.5 10.5 M31.5 10.5 L25.5 14"/></g></svg>
<div class="t" style="left:2066px;top:1790.0px;line-height:44px;font-size:33.9px;font-weight:normal;-webkit-text-stroke:0.58px currentColor;color:#413f3d;transform:scaleX(1.0617);transform-origin:left center;">Subscription</div>
<div class="t" style="left:2277px;top:1794.5px;line-height:38px;font-size:29.1px;font-weight:normal;-webkit-text-stroke:0.49px currentColor;color:#413f3d;transform:scaleX(1.0462);transform-origin:left center;">- 1/31/2022</div>
<div class="t" style="left:2066px;top:1840.5px;line-height:38px;font-size:29.1px;font-weight:normal;color:#6d6b69;transform:scaleX(0.9681);transform-origin:left center;">193</div>
<div class="t" style="left:1922px;top:1948.9px;line-height:37px;font-size:28.6px;font-weight:normal;-webkit-text-stroke:0.49px currentColor;color:#4c66a2;transform:scaleX(0.9426);transform-origin:left center;">DEC 2021 (1)</div>
<svg style="left:2111px;top:1959.9px;" width="30" height="18" viewBox="0 0 30 18" fill="none"><path d="M1.5 16 L15 2.5 L28.5 16" stroke="#8a8886" stroke-width="2.4"/></svg>
<div class="card" style="left:3100.5px;top:273.5px;width:568.5px;height:330px;"></div>
<div class="t" style="left:3141.0px;top:306.5px;line-height:44px;font-size:33.9px;font-weight:normal;-webkit-text-stroke:0.58px currentColor;color:#413f3d;transform:scaleX(0.9145);transform-origin:left center;">CLV</div>
<div class="t" style="left:3141.0px;top:364.5px;line-height:37px;font-size:28.4px;font-weight:normal;color:#6d6b69;transform:scaleX(1.0578);transform-origin:left center;">Last updated 6 months ago</div>
<div style="left:3141.0px;top:429.0px;width:128px;height:128px;background:#f4f0fb;border-radius:6px;"></div>
<svg style="left:3173.0px;top:459.5px;" width="68" height="66" viewBox="0 0 68 66" fill="none"><g stroke="#7560ad" stroke-width="3" fill="none"><path d="M3 1 V62 H66"/><path d="M4 50 L25 29 L36 40 L61 15"/><path d="M44.5 14.5 H62 V32"/></g></svg>
<div class="t" style="left:3303.5px;top:454.0px;line-height:86px;font-size:66.0px;font-weight:normal;-webkit-text-stroke:1.12px currentColor;color:#0b0b0b;transform:scaleX(0.9243);transform-origin:left center;">5.1K</div>
<div class="card" style="left:3710.5px;top:273.5px;width:568.5px;height:330px;"></div>
<div class="t" style="left:3751.0px;top:306.5px;line-height:44px;font-size:33.9px;font-weight:normal;-webkit-text-stroke:0.58px currentColor;color:#413f3d;transform:scaleX(1.0310);transform-origin:left center;">Average Review Rating</div>
<div class="t" style="left:3751.0px;top:364.5px;line-height:37px;font-size:28.4px;font-weight:normal;color:#6d6b69;transform:scaleX(1.0578);transform-origin:left center;">Last updated 6 months ago</div>
<div style="left:3751.0px;top:429.0px;width:128px;height:128px;background:#f4f0fb;border-radius:6px;"></div>
<svg style="left:3783.0px;top:459.5px;" width="68" height="66" viewBox="0 0 68 66" fill="none"><g stroke="#7560ad" stroke-width="3" fill="none"><path d="M3 1 V62 H66"/><path d="M4 50 L25 29 L36 40 L61 15"/><path d="M44.5 14.5 H62 V32"/></g></svg>
<div class="t" style="left:3913.5px;top:454.0px;line-height:86px;font-size:66.0px;font-weight:normal;-webkit-text-stroke:1.12px currentColor;color:#0b0b0b;transform:scaleX(1.0349);transform-origin:left center;">4</div>
<div class="card" style="left:3100.5px;top:647.5px;width:568.5px;height:330px;"></div>
<div class="t" style="left:3141.0px;top:680.5px;line-height:44px;font-size:33.9px;font-weight:normal;-webkit-text-stroke:0.58px currentColor;color:#413f3d;transform:scaleX(1.0144);transform-origin:left center;">Churn Score</div>
<div class="t" style="left:3141.0px;top:738.5px;line-height:37px;font-size:28.4px;font-weight:normal;color:#6d6b69;transform:scaleX(1.0578);transform-origin:left center;">Last updated 6 months ago</div>
<div style="left:3141.0px;top:803.0px;width:128px;height:128px;background:#f4f0fb;border-radius:6px;"></div>
<svg style="left:3173.0px;top:833.5px;" width="68" height="66" viewBox="0 0 68 66" fill="none"><g stroke="#7560ad" stroke-width="3" fill="none"><path d="M3 1 V62 H66"/><path d="M4 50 L25 29 L36 40 L61 15"/><path d="M44.5 14.5 H62 V32"/></g></svg>
<div class="t" style="left:3303.5px;top:828.0px;line-height:86px;font-size:66.0px;font-weight:normal;-webkit-text-stroke:1.12px currentColor;color:#0b0b0b;transform:scaleX(1.0275);transform-origin:left center;">0.06</div>
<div class="card" style="left:3710.5px;top:647.5px;width:568.5px;height:330px;"></div>
<div class="t" style="left:3751.0px;top:680.5px;line-height:44px;font-size:33.9px;font-weight:normal;-webkit-text-stroke:0.58px currentColor;color:#413f3d;transform:scaleX(1.0455);transform-origin:left center;">Subscription Spends</div>
<div class="t" style="left:3751.0px;top:738.5px;line-height:37px;font-size:28.4px;font-weight:normal;color:#6d6b69;transform:scaleX(1.0578);transform-origin:left center;">Last updated 6 months ago</div>
<div style="left:3751.0px;top:803.0px;width:128px;height:128px;background:#f4f0fb;border-radius:6px;"></div>
<svg style="left:3783.0px;top:833.5px;" width="68" height="66" viewBox="0 0 68 66" fill="none"><g stroke="#7560ad" stroke-width="3" fill="none"><path d="M3 1 V62 H66"/><path d="M4 50 L25 29 L36 40 L61 15"/><path d="M44.5 14.5 H62 V32"/></g></svg>
<div class="t" style="left:3913.5px;top:828.0px;line-height:86px;font-size:66.0px;font-weight:normal;-webkit-text-stroke:1.12px currentColor;color:#0b0b0b;transform:scaleX(0.9942);transform-origin:left center;">2.7K</div>
<div class="card" style="left:3100.5px;top:1019.5px;width:568.5px;height:330px;"></div>
<div class="t" style="left:3141.0px;top:1052.5px;line-height:44px;font-size:33.9px;font-weight:normal;-webkit-text-stroke:0.58px currentColor;color:#413f3d;transform:scaleX(1.0428);transform-origin:left center;">Average Spend Online</div>
<div class="t" style="left:3141.0px;top:1110.5px;line-height:37px;font-size:28.4px;font-weight:normal;color:#6d6b69;transform:scaleX(1.0578);transform-origin:left center;">Last updated 6 months ago</div>
<div style="left:3141.0px;top:1175.0px;width:128px;height:128px;background:#f4f0fb;border-radius:6px;"></div>
<svg style="left:3173.0px;top:1205.5px;" width="68" height="66" viewBox="0 0 68 66" fill="none"><g stroke="#7560ad" stroke-width="3" fill="none"><path d="M3 1 V62 H66"/><path d="M4 50 L25 29 L36 40 L61 15"/><path d="M44.5 14.5 H62 V32"/></g></svg>
<div class="t" style="left:3303.5px;top:1200.0px;line-height:86px;font-size:66.0px;font-weight:normal;-webkit-text-stroke:1.12px currentColor;color:#0b0b0b;transform:scaleX(0.9163);transform-origin:left center;">111.67</div>
<div class="card" style="left:3710.5px;top:1019.5px;width:568.5px;height:330px;"></div>
<div class="t" style="left:3751.0px;top:1052.5px;line-height:44px;font-size:33.9px;font-weight:normal;-webkit-text-stroke:0.58px currentColor;color:#413f3d;transform:scaleX(1.0363);transform-origin:left center;">Average Spend InStore</div>
<div class="t" style="left:3751.0px;top:1110.5px;line-height:37px;font-size:28.4px;font-weight:normal;color:#6d6b69;transform:scaleX(1.0578);transform-origin:left center;">Last updated 6 months ago</div>
<div style="left:3751.0px;top:1175.0px;width:128px;height:128px;background:#f4f0fb;border-radius:6px;"></div>
<svg style="left:3783.0px;top:1205.5px;" width="68" height="66" viewBox="0 0 68 66" fill="none"><g stroke="#7560ad" stroke-width="3" fill="none"><path d="M3 1 V62 H66"/><path d="M4 50 L25 29 L36 40 L61 15"/><path d="M44.5 14.5 H62 V32"/></g></svg>
<div class="t" style="left:3913.5px;top:1200.0px;line-height:86px;font-size:66.0px;font-weight:normal;-webkit-text-stroke:1.12px currentColor;color:#0b0b0b;transform:scaleX(0.9709);transform-origin:left center;">188.33</div>
<div class="card" style="left:3100.5px;top:1391.5px;width:568.5px;height:330px;"></div>
<div class="t" style="left:3141.0px;top:1424.5px;line-height:44px;font-size:33.9px;font-weight:normal;-webkit-text-stroke:0.58px currentColor;color:#413f3d;transform:scaleX(1.0397);transform-origin:left center;">Total Spend InStore</div>
<div class="t" style="left:3141.0px;top:1482.5px;line-height:37px;font-size:28.4px;font-weight:normal;color:#6d6b69;transform:scaleX(1.0578);transform-origin:left center;">Last updated 6 months ago</div>
<div style="left:3141.0px;top:1547.0px;width:128px;height:128px;background:#f4f0fb;border-radius:6px;"></div>
<svg style="left:3173.0px;top:1577.5px;" width="68" height="66" viewBox="0 0 68 66" fill="none"><g stroke="#7560ad" stroke-width="3" fill="none"><path d="M3 1 V62 H66"/><path d="M4 50 L25 29 L36 40 L61 15"/><path d="M44.5 14.5 H62 V32"/></g></svg>
<div class="t" style="left:3303.5px;top:1572.0px;line-height:86px;font-size:66.0px;font-weight:normal;-webkit-text-stroke:1.12px currentColor;color:#0b0b0b;transform:scaleX(0.9206);transform-origin:left center;">1.7K</div>
<div class="card" style="left:3710.5px;top:1391.5px;width:568.5px;height:330px;"></div>
<div class="t" style="left:3751.0px;top:1424.5px;line-height:44px;font-size:33.9px;font-weight:normal;-webkit-text-stroke:0.58px currentColor;color:#413f3d;transform:scaleX(1.0510);transform-origin:left center;">Total Spend Online</div>
<div class="t" style="left:3751.0px;top:1482.5px;line-height:37px;font-size:28.4px;font-weight:normal;color:#6d6b69;transform:scaleX(1.0578);transform-origin:left center;">Last updated 6 months ago</div>
<div style="left:3751.0px;top:1547.0px;width:128px;height:128px;background:#f4f0fb;border-radius:6px;"></div>
<svg style="left:3783.0px;top:1577.5px;" width="68" height="66" viewBox="0 0 68 66" fill="none"><g stroke="#7560ad" stroke-width="3" fill="none"><path d="M3 1 V62 H66"/><path d="M4 50 L25 29 L36 40 L61 15"/><path d="M44.5 14.5 H62 V32"/></g></svg>
<div class="t" style="left:3913.5px;top:1572.0px;line-height:86px;font-size:66.0px;font-weight:normal;-webkit-text-stroke:1.12px currentColor;color:#0b0b0b;transform:scaleX(1.0306);transform-origin:left center;">670</div>
<div class="card" style="left:3100.5px;top:1765px;width:1179px;height:518px;"></div>
<div class="t" style="left:3141px;top:1800.5px;line-height:44px;font-size:33.9px;font-weight:normal;-webkit-text-stroke:0.58px currentColor;color:#413f3d;transform:scaleX(1.0515);transform-origin:left center;">Interest SoV for customers like Alex Baker</div>
<svg style="left:4182.5px;top:1802.5px;" width="42" height="42" viewBox="0 0 42 42" fill="none"><circle cx="21" cy="21" r="18.5" stroke="#55534f" stroke-width="2.4"/><path d="M21 18.5 V30" stroke="#55534f" stroke-width="2.8"/><circle cx="21" cy="12.8" r="1.9" fill="#55534f"/></svg>
<div style="left:3628px;top:1913px;width:2px;height:266px;background:#eaecf1;"></div>
<div style="left:3866px;top:1913px;width:2px;height:266px;background:#eaecf1;"></div>
<div style="left:4104px;top:1913px;width:2px;height:266px;background:#eaecf1;"></div>
<div style="left:3389.5px;top:1913px;width:2.5px;height:267px;background:#d4d7e0;"></div>
<div style="left:3389.5px;top:2178px;width:851px;height:2.5px;background:#d9dce4;"></div>
<div style="left:3391.5px;top:1985px;width:848.5px;height:124px;background:#1a8cff;"></div>
<div class="t" style="left:3187.9px;top:2029.0px;line-height:35px;font-size:26.7px;font-weight:normal;color:#4d4b49;transform:scaleX(0.9874);transform-origin:right center;">BBQs &amp; Gril...</div>
<div class="t" style="left:3372.1px;top:2198.1px;line-height:35px;font-size:26.7px;font-weight:normal;color:#4d4b49;">0%</div>
<div class="t" style="left:3609.9px;top:2198.1px;line-height:35px;font-size:26.7px;font-weight:normal;color:#4d4b49;">5%</div>
<div class="t" style="left:3840.3px;top:2198.1px;line-height:35px;font-size:26.7px;font-weight:normal;color:#4d4b49;">10%</div>
<div class="t" style="left:4078.1px;top:2198.1px;line-height:35px;font-size:26.7px;font-weight:normal;color:#4d4b49;">15%</div>
</body></html>
